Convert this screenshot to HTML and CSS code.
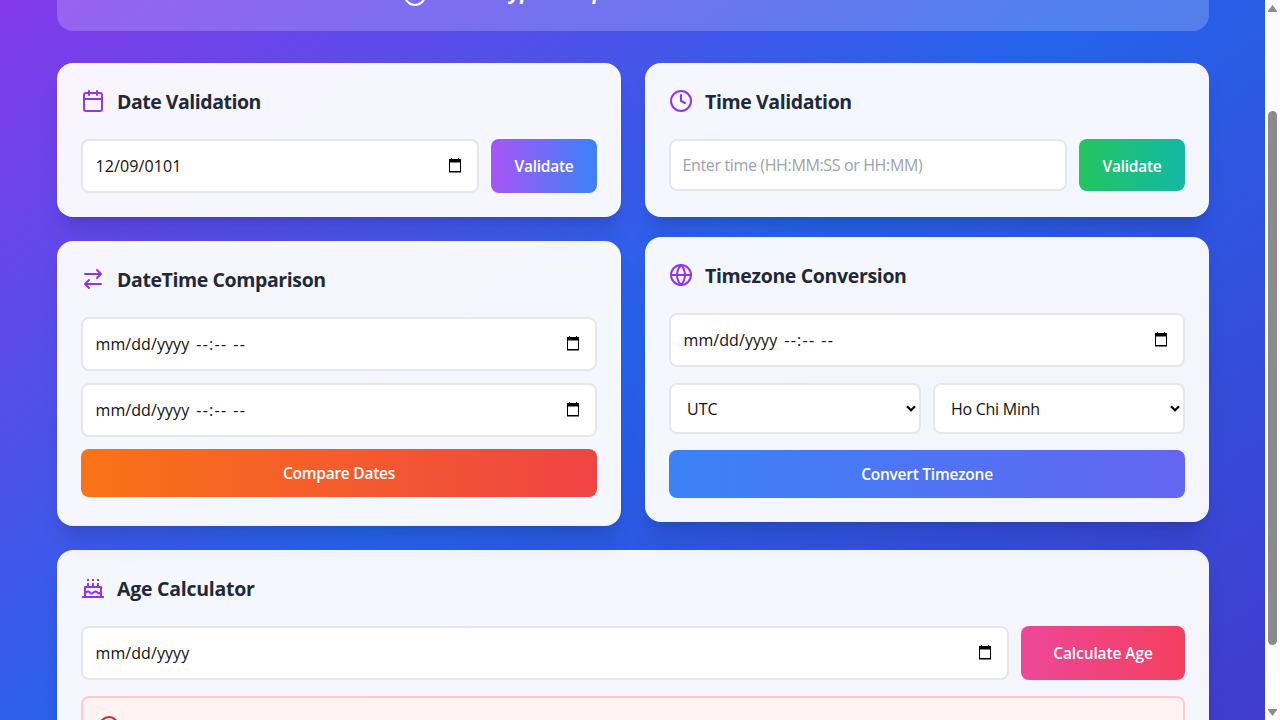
FILE: index.html
```html
<!DOCTYPE html>
<html lang="en">
<head>
<meta charset="utf-8">
<title>DateTime Tools</title>
<link rel="stylesheet" href="styles.css">
</head>
<body>
<div class="viewport">
  <main class="page">
    <header class="hero">
      <svg class="hero-icon" viewBox="0 0 24 24"><circle cx="12" cy="12" r="10"/><path d="M12 6v6l4 2"/></svg>
      <span class="hero-title">DateType Comparer</span>
    </header>
    <div class="columns">
      <div class="column left">
        <section class="card">
          <h2><svg class="icon" viewBox="0 0 24 24"><rect x="3" y="4" width="18" height="18" rx="2"/><path d="M16 2v4M8 2v4M3 10h18"/></svg><span class="t-date">Date Validation</span></h2>
          <div class="row">
            <div class="field date"><span class="v-date">12/09/0101</span><svg class="cal" viewBox="0 0 12 15"><path fill-rule="evenodd" d="M2 0h1v1h6V0h1v1h2v13.500H0V1h2zM1 4.500v8.500h10V4.500z"/></svg></div>
            <button class="btn purple">Validate</button>
          </div>
        </section>
        <section class="card compare">
          <h2><svg class="icon" viewBox="0 0 24 24"><path d="m16 3 4 4-4 4M20 7H4M8 21l-4-4 4-4M4 17h16"/></svg><span class="t-comp">DateTime Comparison</span></h2>
          <div class="stack">
            <div class="field date"><span class="v-mdy">mm/dd/yyyy</span><span class="v-time">--:--</span><span class="v-ap">--</span><svg class="cal" viewBox="0 0 12 15"><path fill-rule="evenodd" d="M2 0h1v1h6V0h1v1h2v13.500H0V1h2zM1 4.500v8.500h10V4.500z"/></svg></div>
            <div class="field date"><span class="v-mdy">mm/dd/yyyy</span><span class="v-time">--:--</span><span class="v-ap">--</span><svg class="cal" viewBox="0 0 12 15"><path fill-rule="evenodd" d="M2 0h1v1h6V0h1v1h2v13.500H0V1h2zM1 4.500v8.500h10V4.500z"/></svg></div>
            <button class="btn orange">Compare Dates</button>
          </div>
        </section>
      </div>
      <div class="column right">
        <section class="card time">
          <h2><svg class="icon" viewBox="0 0 24 24"><circle cx="12" cy="12" r="10"/><path d="M12 6v6l4 2"/></svg><span class="t-time">Time Validation</span></h2>
          <div class="row">
            <div class="field text"><span class="v-ph">Enter time (HH:MM:SS or HH:MM)</span></div>
            <button class="btn green">Validate</button>
          </div>
        </section>
        <section class="card zone">
          <h2><svg class="icon" viewBox="0 0 24 24"><circle cx="12" cy="12" r="10"/><path d="M12 2a15.300 15.300 0 0 1 4 10 15.300 15.300 0 0 1-4 10 15.300 15.300 0 0 1-4-10 15.300 15.300 0 0 1 4-10zM2 12h20"/></svg><span class="t-zone">Timezone Conversion</span></h2>
          <div class="stack wide">
            <div class="field date"><span class="v-mdy">mm/dd/yyyy</span><span class="v-time">--:--</span><span class="v-ap">--</span><svg class="cal" viewBox="0 0 12 15"><path fill-rule="evenodd" d="M2 0h1v1h6V0h1v1h2v13.500H0V1h2zM1 4.500v8.500h10V4.500z"/></svg></div>
            <div class="row">
              <div class="field select"><span class="v-utc">UTC</span><svg class="chev" viewBox="0 0 10 7"><path d="m1 1.300 4 4 4-4"/></svg></div>
              <div class="field select"><span class="v-hcm">Ho Chi Minh</span><svg class="chev" viewBox="0 0 10 7"><path d="m1 1.300 4 4 4-4"/></svg></div>
            </div>
            <button class="btn blue">Convert Timezone</button>
          </div>
        </section>
      </div>
    </div>
    <section class="card age">
      <h2><svg class="icon cake" viewBox="0 0 24 24"><path d="M4 21V11h16v10M1 21h22M5 16.500c1.500-1.500 2.500-1.500 4 0s2 1.500 3.500 0 2.500-1.500 4 0 2 1 3 0M7 7v4M12 7v4M17 7v4M7 3v2M12 3v2M17 3v2"/></svg><span class="t-age">Age Calculator</span></h2>
      <div class="row">
        <div class="field date"><span class="v-mdy">mm/dd/yyyy</span><svg class="cal" viewBox="0 0 12 15"><path fill-rule="evenodd" d="M2 0h1v1h6V0h1v1h2v13.500H0V1h2zM1 4.500v8.500h10V4.500z"/></svg></div>
        <button class="btn pink">Calculate Age</button>
      </div>
      <div class="alert"><svg viewBox="0 0 20 20"><circle cx="10" cy="10" r="9"/><path d="M10 6v5M10 14v.1"/></svg></div>
    </section>
  </main>
  <div class="scrollbar"><svg viewBox="0 0 9 7"><path d="M4.500 0 9 6v1H0V6z"/></svg><div class="thumb"></div><svg class="down" viewBox="0 0 9 7"><path d="M4.500 7 9 1V0H0v1z"/></svg></div>
</div>
</body>
</html>
```
FILE: styles.css
```css
* { box-sizing: border-box; }
body { margin: 0; font-family: "Open Sans", "Noto Sans", sans-serif; font-size: 16px; line-height: 24px; }
.viewport { display: flex; width: 1280px; height: 720px; overflow: hidden; }
.page { width: 1265px; height: 720px; padding: 0 56px 0 57px; overflow: hidden; background: linear-gradient(to bottom right, #9333ea, #2563eb, #4338ca) 0 -127px / 1265px 925px no-repeat; }
.hero { height: 31px; border-radius: 0 0 16px 16px; background: rgba(255,255,255,.2); display: flex; gap: 25px; padding-left: 346px; overflow: hidden; color: #fff; }
.hero-icon { width: 24px; height: 24px; margin-top: -17px; flex: none; fill: none; stroke: #fff; stroke-width: 2; }
.hero-title { margin-top: -22px; font-size: 20px; font-style: italic; font-weight: 700; line-height: 28px; letter-spacing: .4px; white-space: nowrap; }
.columns { display: grid; grid-template-columns: 564px 564px; gap: 24px; margin-top: 32px; align-items: start; }
.column { display: flex; flex-direction: column; gap: 24px; }
.right { gap: 20px; }
.card { background: rgba(255,255,255,.95); border-radius: 16px; padding: 24px; box-shadow: 0 20px 25px -5px rgba(0,0,0,.1), 0 8px 10px -6px rgba(0,0,0,.1); }
.time { height: 154px; }
.compare, .zone { height: 285px; }
.age { margin-top: 24px; height: 260px; }
h2 { display: flex; align-items: center; gap: 12px; height: 28px; margin: 0 0 24px; font-size: 19.5px; line-height: 28px; font-weight: 700; color: #1f2937; white-space: nowrap; }
h2 span { padding-top: 1px; }
.t-date { letter-spacing: -.48px; }
.t-time, .t-comp { letter-spacing: -.4px; }
.t-zone { letter-spacing: -.35px; }
.t-age { letter-spacing: -.26px; }
.icon { width: 24px; height: 24px; flex: none; fill: none; stroke: #9333ea; stroke-width: 2; stroke-linecap: round; stroke-linejoin: round; }
.cake { stroke-linecap: butt; }
.row { display: flex; gap: 12px; }
.stack { display: flex; flex-direction: column; gap: 12px; }
.wide { gap: 16px; }
.field { flex: 1; display: flex; align-items: center; background: #fff; border: 2px solid #e5e7eb; border-radius: 8px; height: 54px; padding: 0 15px 0 12.5px; white-space: nowrap; color: #111; }
.stack > .field { flex: none; }
.text { height: 52px; padding: 0 15px 1px 11.5px; color: #9ca3af; }
.select { height: 51px; padding: 1px 3px 0 16px; }
.chev { width: 10px; height: 7px; margin: -2px 0 0 auto; fill: none; stroke: #000; stroke-width: 2.2; }
.cal { width: 12px; height: 15px; margin: -1px 1px 0 auto; }
.v-date { letter-spacing: .1px; }
.v-ph { letter-spacing: -.36px; }
.v-hcm { letter-spacing: -.27px; }
.v-mdy { margin-right: 7px; letter-spacing: .08px; }
.v-time { margin-right: 6px; letter-spacing: 1.25px; }
.v-ap { letter-spacing: 1.3px; }
.btn { border: 0; border-radius: 8px; width: 106px; height: 54px; padding: 0; color: #fff; font: 600 15.5px/24px "Open Sans", "Noto Sans", sans-serif; letter-spacing: -.25px; white-space: nowrap; }
.stack .btn { width: 100%; height: 48px; }
.purple { background: linear-gradient(to right, #a855f7, #3b82f6); }
.green { height: 52px; padding-top: 1px; background: linear-gradient(to right, #22c55e, #14b8a6); }
.orange { background: linear-gradient(to right, #f97316, #ef4444); }
.blue { background: linear-gradient(to right, #3b82f6, #6366f1); }
.pink { width: 164px; letter-spacing: -.1px; background: linear-gradient(to right, #ec4899, #f43f5e); }
.alert { margin-top: 16px; height: 60px; padding: 18px 16px; border: 2px solid #fecaca; border-radius: 8px; background: #fef2f2; }
.alert svg { display: block; width: 20px; height: 20px; fill: none; stroke: #dc2626; stroke-width: 2; }
.scrollbar { width: 15px; height: 720px; padding: 5px 3px 4px; display: flex; flex-direction: column; background: #fcfcfc; }
.scrollbar svg { width: 9px; height: 7px; fill: #8b8b8b; }
.thumb { margin-top: 99px; width: 9px; height: 534px; border-radius: 5px; background: #8b8b8b; }
.scrollbar .down { margin-top: auto; }
```
